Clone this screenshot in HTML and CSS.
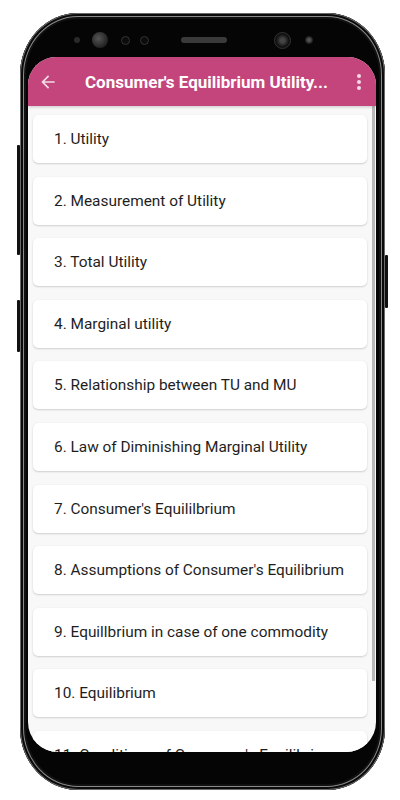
FILE: index.html
```html
<!DOCTYPE html>
<html lang="en">
<head>
    <meta charset="UTF-8">
    <meta name="viewport" content="width=device-width, initial-scale=1.0">
    <title>Consumer's Equilibrium Utility</title>
    <link rel="stylesheet" href="styles.css">
</head>
<body>
    <div class="phone">
        <div class="side-btn left-1"></div>
        <div class="side-btn left-2"></div>
        <div class="side-btn right-1"></div>

        <div class="sensors">
            <span class="dot tiny"></span>
            <span class="dot big"></span>
            <span class="dot ring"></span>
            <span class="dot ring small"></span>
            <span class="speaker"></span>
            <span class="dot cam"></span>
            <span class="dot lens"></span>
        </div>

        <div class="screen">
            <div class="app-bar">
                <svg class="back" width="20" height="20" viewBox="0 0 24 24">
                    <path d="M20 11H7.8l5.6-5.6L12 4l-8 8 8 8 1.4-1.4L7.8 13H20z" fill="#f3dbe6"/>
                </svg>
                <div class="title">Consumer's Equilibrium Utility...</div>
                <svg class="menu" width="6" height="18" viewBox="0 0 6 18">
                    <circle cx="3" cy="3" r="2" fill="#f3dbe6"/>
                    <circle cx="3" cy="9" r="2" fill="#f3dbe6"/>
                    <circle cx="3" cy="15" r="2" fill="#f3dbe6"/>
                </svg>
            </div>
            <div class="list">
                <div class="card">1. Utility</div>
                <div class="card">2. Measurement of Utility</div>
                <div class="card">3. Total Utility</div>
                <div class="card">4. Marginal utility</div>
                <div class="card">5. Relationship between TU and MU</div>
                <div class="card">6. Law of Diminishing Marginal Utility</div>
                <div class="card">7. Consumer's Equililbrium</div>
                <div class="card">8. Assumptions of Consumer's Equilibrium</div>
                <div class="card">9. Equillbrium in case of one commodity</div>
                <div class="card">10. Equilibrium</div>
                <div class="card">11. Conditions of Consumer's Equilibrium</div>
            </div>
            <div class="scrollbar"></div>
        </div>
    </div>
</body>
</html>
```
FILE: styles.css
```css
body {
    margin: 0;
    background: #fff;
    font-family: Roboto, "Liberation Sans", Arial, sans-serif;
}
.phone {
    position: relative;
    width: 365px;
    height: 777px;
    margin: 13px 0 0 20px;
    box-sizing: border-box;
    background: #050505;
    border-radius: 58px / 62px;
    box-shadow: inset 0 0 0 1px #6a6a6a, inset 0 0 0 3px #0a0a0a, inset 0 0 0 4px #8a8a8a, inset 0 0 0 6px #111;
    display: flex;
    flex-direction: column;
    padding: 0 9px 0 8px;
}
.side-btn {
    position: absolute;
    width: 3px;
    background: #111;
    border-radius: 1px;
}
.left-1 { left: -3px; top: 132px; height: 110px; }
.left-2 { left: -3px; top: 287px; height: 52px; }
.right-1 { right: -3px; top: 242px; height: 53px; }

.sensors {
    height: 44px;
    display: flex;
    align-items: center;
    padding-left: 46px;
    box-sizing: border-box;
    padding-top: 10px;
}
.dot {
    display: block;
    border-radius: 50%;
    background: #1c1c1c;
}
.tiny { width: 6px; height: 6px; background: #2a2a2a; margin-right: 12px; }
.big { width: 16px; height: 16px; background: radial-gradient(circle at 40% 40%, #555, #222 70%); margin-right: 13px; }
.ring { width: 7px; height: 7px; border: 1px solid #333; background: #0c0c0c; margin-right: 10px; }
.ring.small { margin-right: 32px; }
.speaker { width: 46px; height: 6px; border-radius: 3px; background: #3a3a3a; margin-right: 47px; }
.cam { width: 15px; height: 15px; border: 1px solid #333; background: radial-gradient(circle, #444 20%, #111 60%); margin-right: 14px; }
.lens { width: 8px; height: 8px; background: radial-gradient(circle, #555 20%, #181818 70%); }

.screen {
    position: relative;
    height: 695px;
    border-radius: 28px 28px 30px 30px;
    overflow: hidden;
    background: #f8f8f8;
    display: flex;
    flex-direction: column;
}
.app-bar {
    height: 49px;
    flex-shrink: 0;
    background: #c4457b;
    display: flex;
    align-items: center;
    padding: 0 14px 0 10px;
    box-shadow: 0 1px 3px rgba(0, 0, 0, 0.2);
    z-index: 1;
}
.back {
    flex-shrink: 0;
}
.title {
    flex: 1;
    margin-left: 27px;
    color: #fff;
    font-size: 17px;
    font-weight: bold;
    white-space: nowrap;
}
.list {
    display: flex;
    flex-direction: column;
    gap: 13.6px;
    padding: 9px 9px 0 5px;
}
.card {
    flex-shrink: 0;
    height: 48px;
    display: flex;
    align-items: center;
    padding-left: 21px;
    background: #fff;
    border-radius: 5px;
    box-shadow: 0 1px 2px rgba(0, 0, 0, 0.16), 0 0 1px rgba(0, 0, 0, 0.08);
    color: #1e1e1e;
    font-size: 15.4px;
}
.scrollbar {
    position: absolute;
    right: 1px;
    top: 49px;
    width: 3px;
    height: 575px;
    background: #b8b8b8;
}
```
